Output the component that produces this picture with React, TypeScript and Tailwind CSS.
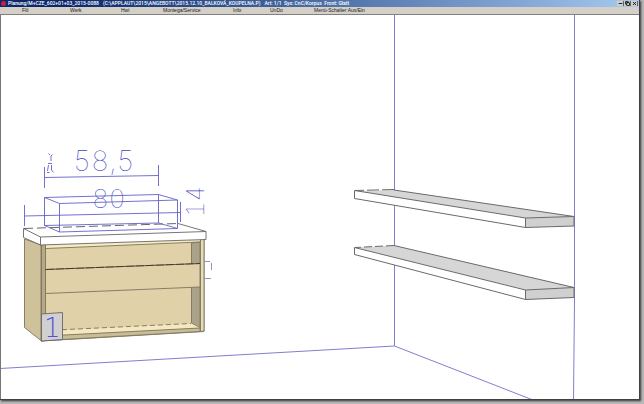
import { Minus, Copy, X } from "lucide-react";

const menu = [
  { label: "Fili", cls: "w-12" },
  { label: "Werk", cls: "w-[51px]" },
  { label: "Hwi", cls: "w-[42px]" },
  { label: "Montega/Service", cls: "w-[70px]" },
  { label: "Info", cls: "w-[37px]" },
  { label: "UnDo", cls: "w-11" },
  { label: "Menü-Schalter Aus/Ein", cls: "w-20" },
];

const controls = [
  { label: "Minimize", Icon: Minus },
  { label: "Restore", Icon: Copy },
  { label: "Close", Icon: X },
];

function TitleBar() {
  return (
    <header className="flex h-[7px] shrink-0 items-center justify-between bg-linear-to-r from-[#0c286b] from-10% to-[#a6caf0] pl-px">
      <div className="flex items-center gap-0.5">
        <span className="h-[5px] w-[5px] rounded-full bg-[#c81e3c]" />
        <h1 className="flex gap-1 font-['Roboto','Liberation_Sans',sans-serif] text-[5px] leading-[7px] font-medium whitespace-pre text-white">
          <span>Planung/M+CZE_602+01+03_2015-0088</span>
          <span>(C:\APPLAUT\2015\ANGEBOTT\2015.12.10_BALKOVÁ_KOUPELNA.P)</span>
          <span>Art: 1/1  Sys: CnC/Korpus  Front: Glatt</span>
        </h1>
      </div>
      <div className="flex pr-px">
        {controls.map(({ label, Icon }) => (
          <button
            key={label}
            aria-label={label}
            className="flex h-[5px] w-[7px] items-center justify-center border-r border-[#606060] bg-[#d4d0c8] text-black"
          >
            <Icon size={5} strokeWidth={4} />
          </button>
        ))}
      </div>
    </header>
  );
}

function MenuBar() {
  return (
    <nav className="flex h-2 shrink-0 items-center border-b border-[#808080] bg-[#d4d0c8] pl-[22px] font-['Liberation_Sans',sans-serif] text-[5px] leading-[7px] text-[#222]">
      {menu.map((m) => (
        <button key={m.label} className={`text-left whitespace-nowrap ${m.cls}`}>
          {m.label}
        </button>
      ))}
    </nav>
  );
}

function Room() {
  return (
    <path
      d="M394.5 15V346M574.5 15V300L573.5 400M0 368.5L394.5 346L533 400"
      stroke="#7f7fd0"
      fill="none"
    />
  );
}

function Shelves() {
  return (
    <g stroke="#6a6a6a" fill="none" strokeLinejoin="round">
      {/* upper */}
      <path fill="#d6d6d6" stroke="none" d="M355 191L394 190L574 216.5L526 218Z" />
      <path fill="#fff" d="M354.5 190.5L525.5 218V227.5L354.5 198.5Z" />
      <path fill="#d0d0d0" d="M525.5 218L574 216.5V226L525.5 227.5Z" />
      <path d="M394 190L574 216.5" />
      <path strokeDasharray="12 3" d="M394 189.5L355 190.5" />
      {/* lower */}
      <path fill="#d6d6d6" stroke="none" d="M355 247.5L394 245.5L574 287.5L526 290Z" />
      <path fill="#fff" d="M354.5 247.5L525.5 290V299.5L354.5 254.5Z" />
      <path fill="#d0d0d0" d="M525.5 290L574 287.5V297.5L525.5 299.5Z" />
      <path d="M394 245.5L574 287.5" />
      <path strokeDasharray="8 3" d="M394 245.5L355 247.5" />
    </g>
  );
}

function Cabinet() {
  return (
    <g stroke="#7d745e" strokeWidth="0.9" fill="none" strokeLinejoin="round">
      <path fill="#cfc19a" d="M24.5 239L41.5 245V341L24.5 327.5Z" />
      <path fill="#e0d1a9" d="M41 245L204 238V331.5L41 341Z" />
      <path fill="#b5a988" d="M41.5 244.5H45.5V340.5L41.5 341Z" />
      <path fill="#f6ebc3" stroke="none" d="M46 244.5L200 239V242L46 248.5Z" />
      <path d="M46 248.5L200 242" />
      <path fill="#aaa38a" d="M191.5 243L200 242V328L191.5 323Z" />
      <path fill="#f3e8c0" stroke="none" d="M46 335.5V331L191 323.5L200 328Z" />
      <path strokeDasharray="5 3" d="M46 330.5L191 323.5" />
      <path fill="#c9bd98" d="M45.5 336L200 328V331.5L45.5 340.5Z" />
      <path fill="#e0d1a9" d="M45.5 269.5L200 263.5V287L45.5 293.5Z" />
      <path stroke="#3c3020" strokeDasharray="9 1" d="M45.5 269.5L200 263.5" />
      <path fill="#e8dcb8" d="M200.5 238.5L204 238V331L200.5 331.5Z" />
      {/* worktop */}
      <path fill="#fff" stroke="none" d="M24 228.5L178 223.5L206 231.5V239.5L41 245L24 238Z" />
      <path stroke="#666" d="M40.5 237L206 231.5V239.5L40.5 245L23.5 237.5V228.5L40.5 237V245M178 223.5L206 231.5" />
      <path stroke="#555" strokeDasharray="9 4" d="M24 228.5L178 223.5" />
    </g>
  );
}

function Dimensions() {
  return (
    <g stroke="#6262c8" strokeWidth="0.9" fill="none">
      {/* basin */}
      <path d="M44.5 197.5L158.5 194.5L177.5 200L59.5 203.5ZV225.5L59.5 232L177.5 228.5L158.5 223L44.5 225.5M59.5 203.5V232M177.5 200V228.5M158.5 194.5V223" />
      {/* dimension lines */}
      <path d="M44.5 167V188M44.5 177.5L158.5 175.5M158.5 165V186" />
      <path d="M24.5 205V226M24.5 216L180.5 212.5M180.5 202V222" />
      <path d="M204 261.5H210M211.5 263V270M204 278.5H211" stroke="#8888b8" />
      <path d="M48.5 153.5L50 155M52.5 154.5L51 156V161M48 163.5H52M48.5 165L47.5 171M51.5 165V170L53.5 172.5M47 172.5H49.5" />
      <g
        stroke="none"
        fill="#4646c0"
        className="font-['Inter','Liberation_Sans',sans-serif] font-thin tabular-nums"
      >
        <text x="73" y="171" fontSize="28">58,5</text>
        <text x="92" y="208" fontSize="26">80</text>
        <text transform="translate(204 217) rotate(-90)" fontSize="24">14</text>
      </g>
      {/* position tag */}
      <path d="M41.5 314L62.5 312.5V339.5L41.5 341Z" fill="#d0d0d0" stroke="#666" />
      <text
        x="44"
        y="337"
        fontSize="26"
        stroke="none"
        fill="#5050d8"
        className="font-['DejaVu_Sans_Light','DejaVu_Sans',sans-serif] font-extralight"
      >
        1
      </text>
    </g>
  );
}

export default function App() {
  return (
    <div className="h-screen bg-[#b8b8b8] pr-1 pb-1">
      <main className="flex h-full flex-col border-r border-b border-[#404040] bg-white shadow-[1px_1px_2px_#333]">
        <TitleBar />
        <MenuBar />
        <svg
          viewBox="1 15 638 384"
          preserveAspectRatio="xMinYMin meet"
          className="min-h-0 w-full flex-1 border-l border-[#777]"
          role="img"
          aria-label="Planung"
        >
          <Room />
          <Shelves />
          <Cabinet />
          <Dimensions />
        </svg>
      </main>
    </div>
  );
}
